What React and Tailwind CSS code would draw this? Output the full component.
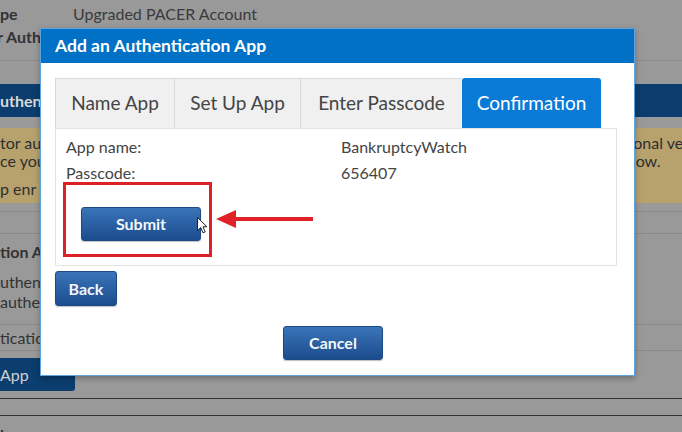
const FONT = { fontFamily: 'Lato, "Open Sans", sans-serif' }

function BlueButton({ children, className = '' }) {
  return (
    <button
      className={`rounded-[3px] border border-[#1b4a85] bg-gradient-to-b from-[#3a74b8] to-[#1b4d8e] text-[16px] font-bold text-[#f4f6fa] shadow-[0_1px_1px_rgba(0,0,0,0.25)] ${className}`}
    >
      {children}
    </button>
  )
}

function Cursor() {
  return (
    <svg width="11" height="17" viewBox="0 0 11 17" className="absolute left-[141px] top-[88px]">
      <path d="M0.5 0.5 L0.5 13.5 L3.8 10.6 L6 15.8 L8.2 14.9 L6 9.8 L10 9.8 Z" fill="#fff" stroke="#222" strokeWidth="1" strokeLinejoin="round" />
    </svg>
  )
}

function RedArrow() {
  return (
    <svg width="100" height="20" viewBox="0 0 100 20" className="absolute left-[159px] top-[80px]">
      <rect x="18" y="8" width="80" height="4" fill="#e02127" />
      <polygon points="1,10 21,1 21,19" fill="#e02127" />
    </svg>
  )
}

const TABS = [
  { label: 'Name App', w: 'w-[119px]' },
  { label: 'Set Up App', w: 'w-[126px]' },
  { label: 'Enter Passcode', w: 'w-[162px]' },
]

function Modal() {
  return (
    <div className="absolute left-[40px] top-[28px] flex h-[348px] w-[595px] flex-col border border-[#5ea3dd] bg-white shadow-[0_2px_6px_rgba(0,0,0,0.3)]">
      <div className="flex h-[34px] items-center bg-[#0071c4] pl-[14px] text-[17.5px] font-bold text-white">
        Add an Authentication App
      </div>

      <div className="flex flex-1 flex-col pl-[14px] pr-[17px] pt-[15px]">
        <div className="flex h-[50px]">
          {TABS.map(t => (
            <div
              key={t.label}
              className={`${t.w} flex items-center justify-center border border-b-0 border-r-0 border-[#d9d9d9] bg-[#f0f0f0] text-[19px] text-[#444]`}
            >
              {t.label}
            </div>
          ))}
          <div className="flex w-[139px] items-center justify-center rounded-t-[3px] bg-[#0a7ad7] text-[19px] text-white">
            Confirmation
          </div>
        </div>

        <div className="relative h-[138px] border border-[#e2e2e2] px-[10px] pt-[5px] text-[16px] text-[#444]">
          <div className="grid grid-cols-[275px_1fr] leading-[26px]">
            <span>App name:</span>
            <span>BankruptcyWatch</span>
            <span>Passcode:</span>
            <span>656407</span>
          </div>
          <BlueButton className="ml-[15px] mt-[21px] h-[34px] w-[120px]">Submit</BlueButton>
          <div className="absolute left-[7px] top-[53px] h-[75px] w-[149px] border-[3px] border-[#dc2127]" />
          <RedArrow />
          <Cursor />
        </div>

        <div className="mt-[5px]">
          <BlueButton className="h-[35px] w-[62px]">Back</BlueButton>
        </div>

        <div className="mt-[20px] flex justify-center">
          <BlueButton className="mr-[6px] h-[34px] w-[100px]">Cancel</BlueButton>
        </div>
      </div>
    </div>
  )
}

function Page() {
  return (
    <div className="flex flex-col whitespace-nowrap text-[16px] text-[#333]">
      <div className="flex h-[27px] shrink-0 items-center">
        <span className="w-[73px] font-bold">pe</span>
        <span className="text-[#3a3a3a]">Upgraded PACER Account</span>
      </div>
      <div className="h-[34px] shrink-0 border-b border-[#8c8c8c] font-bold leading-[20px]">
        <span className="-ml-[3px]">r Auth</span>
      </div>
      <div className="mt-[23px] flex h-[33px] shrink-0 items-center bg-[#0b3d6e] font-bold text-[#d8d8d8]">
        uthent
      </div>
      <div className="mt-[11px] flex h-[75px] shrink-0 bg-[#b7a26d] pt-[6px] leading-[18px] text-[#2f2f2f]">
        <div className="w-[636px]">
          <div>tor au</div>
          <div>ce you</div>
          <div className="mt-[10px]">p enr</div>
        </div>
        <div className="overflow-hidden">
          <div>tional ve</div>
          <div>elow.</div>
        </div>
      </div>
      <div className="mt-[8px] h-[23px] shrink-0 border-y border-[#8a8a8a]" />
      <div className="flex h-[36px] shrink-0 items-center font-bold">tion A</div>
      <div className="shrink-0 leading-[20px]">
        <div className="mt-[2px]">uthent</div>
        <div>auther</div>
      </div>
      <div className="mt-[12px] flex h-[27px] shrink-0 items-center border-y border-[#8a8a8a]">ticatio</div>
      <div className="mt-[7px] flex h-[33px] w-[75px] shrink-0 items-center rounded-br-[3px] bg-[#0b3d6e] text-[#d0d0d0]">App</div>
      <div className="mt-[7px] h-[18px] shrink-0 border-y border-[#333]" />
      <div className="mt-[7px] shrink-0 font-bold">les</div>
    </div>
  )
}

export default function App() {
  return (
    <div className="relative h-[432px] w-[682px] overflow-hidden bg-[#999]" style={FONT}>
      <Page />
      <Modal />
    </div>
  )
}
